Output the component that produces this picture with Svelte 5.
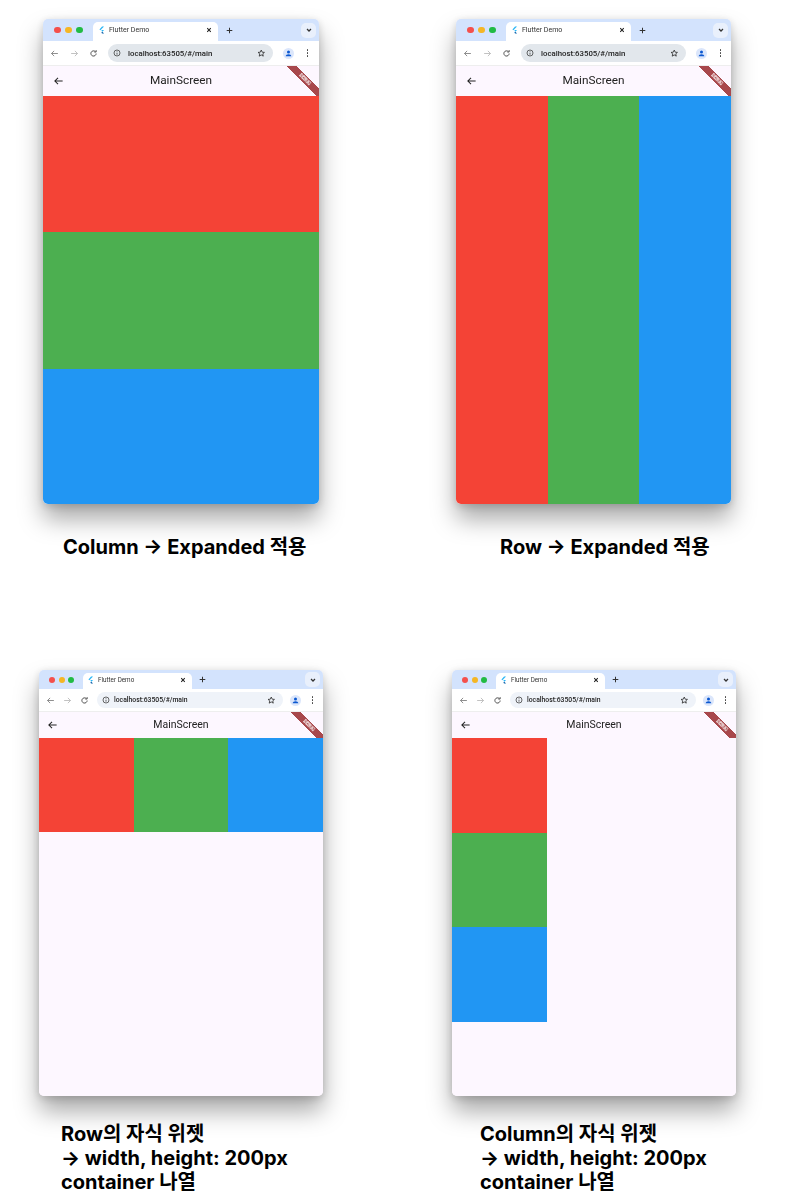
<script lang="ts">
  const panels = [
    { size: 'large', layout: 'col-fill', shift: 'c1', lines: ['Column → Expanded 적용'] },
    { size: 'large', layout: 'row-fill', shift: 'c2', lines: ['Row → Expanded 적용'] },
    { size: 'small', layout: 'row-fixed', shift: 'c3', lines: ['Row의 자식 위젯', '→ width, height: 200px', 'container 나열'] },
    { size: 'small', layout: 'col-fixed', shift: 'c4', lines: ['Column의 자식 위젯', '→ width, height: 200px', 'container 나열'] }
  ];
</script>

{#snippet arrow()}
  <svg viewBox="0 0 24 24" fill="none" stroke="currentColor" stroke-width="2.2"><path d="M21 12H4M11 5l-7 7 7 7" /></svg>
{/snippet}

<div class="page">
  {#each panels as panel}
    <section class="cell {panel.size}">
      <div class="window">
        <div class="tabstrip">
          <div class="dots"><i class="red"></i><i class="yellow"></i><i class="green"></i></div>
          <div class="tab">
            <svg class="favicon" viewBox="0 0 12 14"><path d="M7 1h3.500L4 7.500 2.400 6z" fill="#29b6f6" /><path d="M7 7h3.500L7.400 10.200 5.700 8.400z" fill="#29b6f6" /><path d="M5.700 11.500l1.700-1.300 3.100 3H7z" fill="#0d5fa8" /></svg>
            <span class="tab-title">Flutter Demo</span>
            <svg class="close" viewBox="0 0 10 10" fill="none" stroke="#222" stroke-width="1.700"><path d="M2 2l6 6M8 2l-6 6" /></svg>
          </div>
          <svg class="plus" viewBox="0 0 10 10" fill="none" stroke="#333" stroke-width="1.500"><path d="M5 1v8M1 5h8" /></svg>
          <div class="chevron">
            <svg viewBox="0 0 10 10" fill="none" stroke="#333" stroke-width="1.500"><path d="M2.500 3.800L5 6.300l2.500-2.500" /></svg>
          </div>
        </div>
        <div class="toolbar">
          <span class="tool faded">{@render arrow()}</span>
          <span class="tool faded light">
            <svg viewBox="0 0 24 24" fill="none" stroke="currentColor" stroke-width="2.200"><path d="M3 12h17M13 5l7 7-7 7" /></svg>
          </span>
          <span class="tool">
            <svg viewBox="0 0 24 24" fill="none" stroke="currentColor" stroke-width="2.400"><path d="M19 12a7 7 0 1 1-2-5M19 3v5h-5" /></svg>
          </span>
          <div class="omnibox">
            <svg class="info" viewBox="0 0 24 24" fill="none" stroke="#333" stroke-width="2.200"><circle cx="12" cy="12" r="9" /><path d="M12 11v6M12 7v2" /></svg>
            <span class="url">localhost:63505/#/main</span>
            <svg class="star" viewBox="0 0 24 24" fill="none" stroke="#222" stroke-width="2.200"><path d="M12 3l2.700 6 6.300.6-4.800 4.200 1.500 6.400L12 16.800 6.300 20.200l1.500-6.400L3 9.600 9.300 9z" /></svg>
          </div>
          <div class="avatar">
            <svg viewBox="0 0 16 16" fill="#0b57d0"><circle cx="8" cy="5.500" r="2.700" /><path d="M3 13c0-2.600 2.500-3.800 5-3.800s5 1.200 5 3.800z" /></svg>
          </div>
          <div class="kebab"><i></i><i></i><i></i></div>
        </div>
        <div class="body">
          <header class="appbar">
            <span class="back">{@render arrow()}</span>
            <span class="title">MainScreen</span>
            <div class="ribbon"><span>DEBUG</span></div>
          </header>
          <div class="content {panel.layout}">
            <div class="box r"></div>
            <div class="box g"></div>
            <div class="box b"></div>
          </div>
        </div>
      </div>
      <p class="caption {panel.shift}">
        {#each panel.lines as line}<span>{line}</span>{/each}
      </p>
    </section>
  {/each}
</div>

<style>
  :global(body) {
    margin: 0;
    background: #fff;
  }

  .page {
    display: grid;
    grid-template-columns: 413px 376px;
    grid-template-rows: 651px 524px;
    width: 789px;
    height: 1194px;
    padding-top: 19px;
    overflow: hidden;
    font-family: Roboto, sans-serif;
  }

  .cell.large {
    padding-left: 43px;
  }

  .cell.small {
    padding-left: 39px;
  }

  .window {
    display: flex;
    flex-direction: column;
    overflow: hidden;
    border-radius: 5px;
    background: #fdf7ff;
    box-shadow: 0 15px 24px rgba(0, 0, 0, 0.34), 0 2px 8px rgba(0, 0, 0, 0.16);
    filter: blur(0.35px);
  }

  .large .window {
    width: 276px;
    height: 485px;
  }

  .cell:nth-child(2) .window {
    width: 275px;
  }

  .small .window {
    width: 284px;
    height: 426px;
  }

  .tabstrip {
    display: flex;
    flex: none;
    align-items: flex-end;
    background: #d3e3fd;
  }

  .large .tabstrip {
    height: 22px;
    padding-left: 11px;
  }

  .small .tabstrip {
    height: 19px;
    padding-left: 10px;
  }

  .dots {
    display: flex;
    align-self: center;
  }

  .dots i {
    display: block;
    border-radius: 50%;
  }

  .large .dots {
    gap: 4.500px;
  }

  .small .dots {
    gap: 3.500px;
  }

  .large .dots i {
    width: 6.500px;
    height: 6.500px;
  }

  .small .dots i {
    width: 6px;
    height: 6px;
  }

  .red {
    background: #f4504c;
  }

  .yellow {
    background: #f5b625;
  }

  .green {
    background: #22bb44;
  }

  .tab {
    display: flex;
    align-items: center;
    padding-bottom: 3px;
    box-sizing: border-box;
    border-radius: 5px 5px 0 0;
    background: #fff;
    color: #333;
  }

  .large .tab {
    width: 125px;
    height: 19px;
    margin-left: 10.500px;
    font-size: 7px;
  }

  .small .tab {
    width: 109px;
    height: 16px;
    margin-left: 9px;
    padding-bottom: 2px;
    font-size: 6.300px;
  }

  .favicon {
    flex: none;
    width: 7px;
    height: 8px;
    margin: 0 4px 0 5px;
  }

  .small .favicon {
    margin: 0 4px 0 4px;
  }

  .tab-title {
    flex: 1;
    white-space: nowrap;
  }

  .close {
    flex: none;
    width: 6px;
    height: 6px;
    margin-right: 6px;
  }

  .plus {
    flex: none;
    align-self: center;
    width: 7px;
    height: 7px;
  }

  .large .plus {
    margin-left: 8px;
  }

  .small .plus {
    margin-left: 6.500px;
  }

  .chevron {
    display: grid;
    flex: none;
    align-self: center;
    place-items: center;
    width: 15px;
    height: 15px;
    margin: 0 3px 0 auto;
    border-radius: 5px;
    background: #e9f0fc;
  }

  .chevron svg {
    width: 8px;
    height: 8px;
  }

  .toolbar {
    display: flex;
    flex: none;
    align-items: center;
    background: #fff;
    color: #444;
  }

  .large .toolbar {
    height: 24px;
    padding-left: 2px;
  }

  .small .toolbar {
    height: 22px;
    padding-left: 2.500px;
  }

  .tool {
    display: grid;
    flex: none;
    place-items: center;
  }

  .large .tool {
    width: 19.500px;
  }

  .small .tool {
    width: 17px;
  }

  .tool svg {
    display: block;
    width: 9px;
    height: 9px;
  }

  .faded {
    color: #777;
  }

  .light {
    color: #b5b5b5;
  }

  .omnibox {
    display: flex;
    flex: none;
    align-items: center;
    border-radius: 9px;
  }

  .large .omnibox {
    width: 165px;
    height: 18px;
    margin-left: 4.500px;
    background: #e2e7ec;
    font-size: 7.800px;
  }

  .small .omnibox {
    width: 186px;
    height: 16px;
    margin-left: 4.500px;
    background: #eff3f9;
    font-size: 6.800px;
  }

  .info {
    flex: none;
    width: 8px;
    height: 8px;
    margin: 0 7px 0 5px;
  }

  .small .info {
    margin-right: 4px;
  }

  .url {
    flex: 1;
    color: #222;
    font-weight: 500;
    white-space: nowrap;
  }

  .star {
    flex: none;
    width: 8.500px;
    height: 8.500px;
    margin-right: 8px;
  }

  .avatar {
    display: grid;
    flex: none;
    place-items: center;
    width: 11px;
    height: 11px;
    border-radius: 50%;
    background: #dbe6fb;
  }

  .avatar svg {
    width: 9px;
    height: 9px;
  }

  .large .avatar {
    margin-left: 9.500px;
  }

  .small .avatar {
    margin-left: 6.500px;
  }

  .kebab {
    display: flex;
    flex: none;
    flex-direction: column;
    gap: 1.500px;
  }

  .large .kebab {
    margin-left: 13px;
  }

  .small .kebab {
    margin-left: 11px;
  }

  .kebab i {
    display: block;
    width: 1.500px;
    height: 1.500px;
    border-radius: 50%;
    background: #444;
  }

  .body {
    display: flex;
    flex: 1;
    flex-direction: column;
    min-height: 0;
    background: #fdf7ff;
  }

  .appbar {
    position: relative;
    display: flex;
    flex: none;
    align-items: center;
    justify-content: center;
    box-sizing: border-box;
    padding-bottom: 2px;
    overflow: hidden;
    border-top: 1px solid #eee;
    color: #222;
  }

  .large .appbar {
    height: 31px;
    font-size: 11.800px;
  }

  .small .appbar {
    height: 27px;
    font-size: 10.500px;
  }

  .back {
    position: absolute;
    top: 50%;
    height: 11px;
    transform: translateY(-50%);
  }

  .large .back {
    left: 10px;
  }

  .small .back {
    left: 8px;
  }

  .back svg {
    display: block;
    width: 11px;
    height: 11px;
  }

  .ribbon {
    position: absolute;
    top: 9.500px;
    right: -11px;
    width: 50px;
    height: 7px;
    background: #a8484c;
    transform: rotate(45deg);
    color: #fff;
    font-size: 4.500px;
    font-weight: 700;
    line-height: 7px;
    text-align: center;
  }

  .content {
    display: flex;
    flex: 1;
    min-height: 0;
  }

  .col-fill,
  .col-fixed {
    flex-direction: column;
  }

  .row-fill .box {
    flex: 1;
  }

  .col-fill .r {
    flex: 136;
  }

  .col-fill .g {
    flex: 137;
  }

  .col-fill .b {
    flex: 135;
  }

  .small .box {
    flex: none;
    width: 94.670px;
    height: 94.500px;
  }

  .small .row-fixed .box {
    height: 94px;
  }

  .r {
    background: #f44336;
  }

  .g {
    background: #4caf50;
  }

  .b {
    background: #2196f3;
  }

  .caption {
    display: flex;
    flex-direction: column;
    margin: 0;
    color: #000;
    font-family: Inter, 'Noto Sans CJK KR', sans-serif;
    font-size: 20px;
    font-weight: 700;
    line-height: 24px;
    white-space: nowrap;
  }

  .c1 {
    margin: 31px 0 0 20px;
  }

  .c2 {
    margin: 31px 0 0 44px;
  }

  .c3 {
    margin: 26px 0 0 22px;
  }

  .c4 {
    margin: 26px 0 0 28px;
  }
</style>
